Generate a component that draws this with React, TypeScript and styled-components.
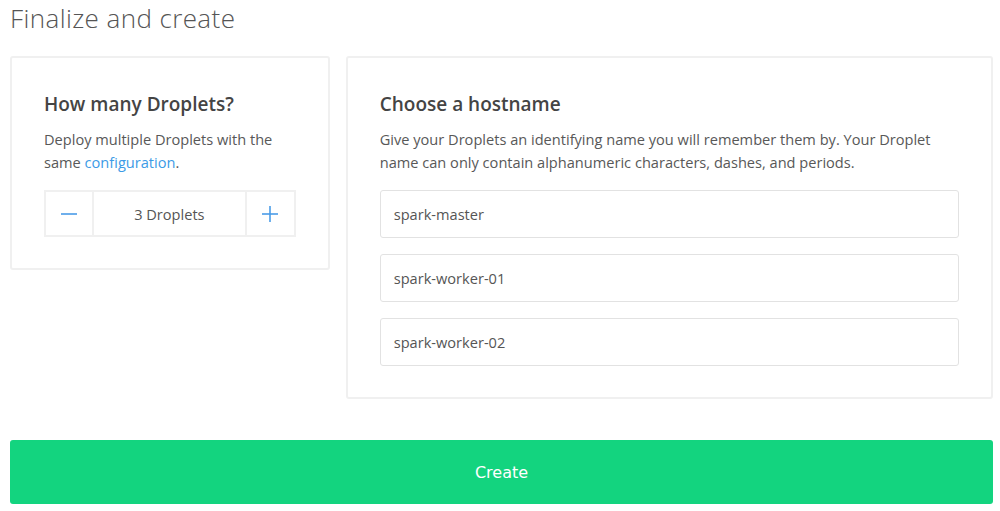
import React from "react";
import styled, { createGlobalStyle } from "styled-components";

const Global = createGlobalStyle`
  html, body { margin: 0; padding: 0; background: #fff; }
  body { font-family: "Open Sans", "Lato", sans-serif; color: #4d4d4d; }
  * { box-sizing: border-box; }
`;

const Page = styled.div`
  width: 983px;
  margin-left: 10px;
  display: flex;
  flex-direction: column;
`;

const Title = styled.h1`
  margin: 0 0 20px;
  font-size: 26px;
  line-height: 36px;
  font-weight: 300;
  letter-spacing: 0.4px;
  color: #555;
`;

const Row = styled.div`
  display: flex;
  align-items: flex-start;
  gap: 16px;
`;

const Card = styled.section<{ $width: number }>`
  width: ${(p) => p.$width}px;
  border: 2px solid #f0f0f0;
  border-radius: 3px;
  padding: 32px 32px 31px;
  display: flex;
  flex-direction: column;
`;

const Heading = styled.h2`
  margin: 0 0 10px;
  font-size: 19px;
  line-height: 28px;
  font-weight: 600;
  color: #444;
`;

const Text = styled.p`
  margin: 0 0 16px;
  font-size: 14.6px;
  line-height: 23px;
  color: #585858;
`;

const Link = styled.a`
  color: #3c9be6;
  text-decoration: none;
`;

const Stepper = styled.div`
  display: grid;
  grid-template-columns: 46px 1fr 47px;
  height: 47px;
  border: 2px solid #f0f0f0;
  background: #f0f0f0;
  gap: 2px;
`;

const StepButton = styled.button`
  background: #fff;
  border: none;
  padding: 0;
  display: flex;
  align-items: center;
  justify-content: center;
  cursor: pointer;
`;

const StepValue = styled.div`
  background: #fff;
  display: flex;
  align-items: center;
  justify-content: center;
  font-size: 14.6px;
  color: #555;
`;

const Inputs = styled.div`
  display: flex;
  flex-direction: column;
  gap: 16px;
`;

const Input = styled.input`
  height: 48px;
  border: 1px solid #e2e2e2;
  border-radius: 3px;
  padding: 0 13px;
  font-family: inherit;
  font-size: 14.6px;
  color: #555;
  outline: none;
`;

const CreateButton = styled.button`
  margin-top: 41px;
  height: 64px;
  width: 100%;
  border: none;
  border-radius: 3px;
  background: #13d47f;
  color: #fff;
  font-family: "DejaVu Sans", sans-serif;
  font-size: 16px;
  cursor: pointer;
`;

const Icon = ({ plus }: { plus?: boolean }) => (
  <svg width="18" height="18" viewBox="0 0 18 18">
    <path d="M1 9h16" stroke="#4a9ce8" strokeWidth="1.6" />
    {plus && <path d="M9 1v16" stroke="#4a9ce8" strokeWidth="1.6" />}
  </svg>
);

export default function App() {
  return (
    <>
      <Global />
      <Page>
        <Title>Finalize and create</Title>
        <Row>
          <Card $width={320}>
            <Heading>How many Droplets?</Heading>
            <Text>
              Deploy multiple Droplets with the same <Link href="#">configuration</Link>.
            </Text>
            <Stepper>
              <StepButton aria-label="decrease"><Icon /></StepButton>
              <StepValue>3 Droplets</StepValue>
              <StepButton aria-label="increase"><Icon plus /></StepButton>
            </Stepper>
          </Card>
          <Card $width={648}>
            <Heading>Choose a hostname</Heading>
            <Text>
              Give your Droplets an identifying name you will remember them by. Your Droplet name can only contain alphanumeric characters, dashes, and periods.
            </Text>
            <Inputs>
              <Input defaultValue="spark-master" />
              <Input defaultValue="spark-worker-01" />
              <Input defaultValue="spark-worker-02" />
            </Inputs>
          </Card>
        </Row>
        <CreateButton>Create</CreateButton>
      </Page>
    </>
  );
}
